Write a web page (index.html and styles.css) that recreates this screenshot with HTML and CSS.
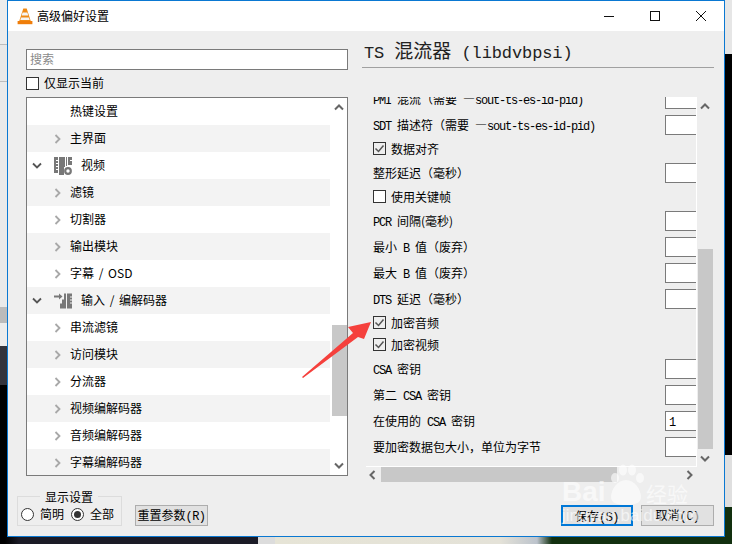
FILE: index.html
```html
<!DOCTYPE html>
<html lang="zh">
<head>
<meta charset="utf-8">
<title>高级偏好设置</title>
<link rel="stylesheet" href="styles.css">
</head>
<body>
<div class="desktop">
  <div class="window">
    <header class="titlebar">
      <svg class="cone" viewBox="0 0 16 17" width="16" height="17">
        <path d="M6.3 0.5h3.4l4.2 13h-11.8z" fill="#f08a14"/>
        <path d="M5.6 4.6h4.8l0.9 3h-6.6z" fill="#f4f4f4"/>
        <path d="M4.2 9.4h7.6l0.9 2.6h-9.4z" fill="#f4f4f4"/>
        <path d="M0.6 13h14.8v3.2h-14.8z" fill="#ef7d0a"/>
      </svg>
      <span class="title-text">高级偏好设置</span>
      <div class="controls">
        <div class="ctl"><svg viewBox="0 0 12 12" width="12" height="12"><path d="M1 6.5h10" stroke="#111" fill="none"/></svg></div>
        <div class="ctl"><svg viewBox="0 0 12 12" width="12" height="12"><rect x="1.5" y="1.5" width="9" height="9" stroke="#111" fill="none"/></svg></div>
        <div class="ctl"><svg viewBox="0 0 12 12" width="12" height="12"><path d="M1 1l10 10M11 1l-10 10" stroke="#111" fill="none"/></svg></div>
      </div>
    </header>
    <div class="body">
      <div class="columns">
        <section class="left">
          <div class="search">搜索</div>
          <label class="only"><span class="box"></span>仅显示当前</label>
          <div class="tree">
            <div class="rows">
              <div class="row child"><span class="name">热键设置</span></div>
              <div class="row child"><svg class="chev" viewBox="0 0 7 10"><path d="M1.5 1l4 4-4 4"/></svg><span class="name">主界面</span></div>
              <div class="row parent">
                <svg class="down" viewBox="0 0 10 7"><path d="M1 1.5l4 4 4-4"/></svg>
                <svg class="ico" viewBox="0 0 18 18" width="18" height="18"><path fill="#787878" d="M0 0h4v3h-2v1h2v2h-2v1h2v2h-2v1h2v2h-2v1h2v3h-4zM5 0h6v10h-1v8h-5zM12 0h1v9h-1zM14 0h4v3h-2v1h2v4h-4z"/><circle cx="14" cy="14" r="2.8" fill="none" stroke="#787878" stroke-width="2.2"/></svg>
                <span class="name pname">视频</span>
              </div>
              <div class="row child"><svg class="chev" viewBox="0 0 7 10"><path d="M1.5 1l4 4-4 4"/></svg><span class="name">滤镜</span></div>
              <div class="row child"><svg class="chev" viewBox="0 0 7 10"><path d="M1.5 1l4 4-4 4"/></svg><span class="name">切割器</span></div>
              <div class="row child"><svg class="chev" viewBox="0 0 7 10"><path d="M1.5 1l4 4-4 4"/></svg><span class="name">输出模块</span></div>
              <div class="row child"><svg class="chev" viewBox="0 0 7 10"><path d="M1.5 1l4 4-4 4"/></svg><span class="name wide">字幕 / OSD</span></div>
              <div class="row parent">
                <svg class="down" viewBox="0 0 10 7"><path d="M1 1.5l4 4 4-4"/></svg>
                <svg class="ico" viewBox="0 0 18 18" width="18" height="18"><path fill="#787878" d="M0 3.5h5v-2l3.5 3-3.5 3v-2h-5zM8 7.5h2v-6h2v15h-6v-5h2zM13 1.5h5v3h-2v1h2v2h-2v1h2v2h-2v1h2v5h-5z"/></svg>
                <span class="name pname wide">输入 / 编解码器</span>
              </div>
              <div class="row child"><svg class="chev" viewBox="0 0 7 10"><path d="M1.5 1l4 4-4 4"/></svg><span class="name">串流滤镜</span></div>
              <div class="row child"><svg class="chev" viewBox="0 0 7 10"><path d="M1.5 1l4 4-4 4"/></svg><span class="name">访问模块</span></div>
              <div class="row child"><svg class="chev" viewBox="0 0 7 10"><path d="M1.5 1l4 4-4 4"/></svg><span class="name">分流器</span></div>
              <div class="row child"><svg class="chev" viewBox="0 0 7 10"><path d="M1.5 1l4 4-4 4"/></svg><span class="name">视频编解码器</span></div>
              <div class="row child"><svg class="chev" viewBox="0 0 7 10"><path d="M1.5 1l4 4-4 4"/></svg><span class="name">音频编解码器</span></div>
              <div class="row child"><svg class="chev" viewBox="0 0 7 10"><path d="M1.5 1l4 4-4 4"/></svg><span class="name">字幕编解码器</span></div>
            </div>
            <div class="vbar tree-bar">
              <svg class="sb-arrow" viewBox="0 0 10 7"><path d="M1 5.5l4-4 4 4"/></svg>
              <div class="track"><div class="thumb tree-thumb"></div></div>
              <svg class="sb-arrow" viewBox="0 0 10 7"><path d="M1 1.5l4 4 4-4"/></svg>
            </div>
          </div>
        </section>
        <section class="right">
          <h1 class="heading"><span class="hl">TS </span>混流器<span class="hl"> (libdvbpsi)</span></h1>
          <div class="scroller">
            <div class="pane">
              <div class="form">
                <div class="field first"><span><span class="l">PMI </span>混流（需要<span class="l"> </span>—<span class="l">sout-ts-es-id-pid)</span></span><i class="inp"></i></div>
                <div class="field"><span><span class="l">SDT </span>描述符（需要<span class="l"> </span>—<span class="l">sout-ts-es-id-pid)</span></span><i class="inp"></i></div>
                <div class="check"><span class="box on"><svg viewBox="0 0 13 13" width="13" height="13"><path d="M2.5 6.5l3 3 5-6"/></svg></span>数据对齐</div>
                <div class="field"><span>整形延迟（毫秒）</span><i class="inp"></i></div>
                <div class="check"><span class="box"></span>使用关键帧</div>
                <div class="field"><span><span class="l">PCR </span>间隔(毫秒)</span><i class="inp"></i></div>
                <div class="field"><span>最小<span class="l"> B </span>值（废弃）</span><i class="inp"></i></div>
                <div class="field"><span>最大<span class="l"> B </span>值（废弃）</span><i class="inp"></i></div>
                <div class="field"><span><span class="l">DTS </span>延迟（毫秒）</span><i class="inp"></i></div>
                <div class="check"><span class="box on"><svg viewBox="0 0 13 13" width="13" height="13"><path d="M2.5 6.5l3 3 5-6"/></svg></span>加密音频</div>
                <div class="check"><span class="box on"><svg viewBox="0 0 13 13" width="13" height="13"><path d="M2.5 6.5l3 3 5-6"/></svg></span>加密视频</div>
                <div class="field"><span><span class="l">CSA </span>密钥</span><i class="inp"></i></div>
                <div class="field"><span>第二<span class="l"> CSA </span>密钥</span><i class="inp"></i></div>
                <div class="field"><span>在使用的<span class="l"> CSA </span>密钥</span><i class="inp"><span class="l">1</span></i></div>
                <div class="field"><span>要加密数据包大小，单位为字节</span><i class="inp"></i></div>
              </div>
            </div>
            <div class="vbar pane-bar">
              <svg class="sb-arrow" viewBox="0 0 10 7"><path d="M1 5.5l4-4 4 4"/></svg>
              <div class="track"><div class="thumb pane-thumb"></div></div>
              <svg class="sb-arrow" viewBox="0 0 10 7"><path d="M1 1.5l4 4 4-4"/></svg>
            </div>
            <div class="hbar">
              <svg class="sb-arrow-h" viewBox="0 0 7 10"><path d="M5.5 1l-4 4 4 4"/></svg>
              <div class="htrack"><div class="hthumb"></div></div>
              <svg class="sb-arrow-h" viewBox="0 0 7 10"><path d="M1.5 1l4 4-4 4"/></svg>
            </div>
          </div>
        </section>
      </div>
      <footer class="footer">
        <fieldset class="group">
          <legend>显示设置</legend>
          <span class="radio"></span><span class="rlabel">简明</span>
          <span class="radio sel"></span><span class="rlabel">全部</span>
        </fieldset>
        <button class="btn reset">重置参数<span class="bl">(R)</span></button>
        <div class="spacer"></div>
        <button class="btn primary">保存<span class="bl">(S)</span></button>
        <button class="btn cancel">取消<span class="bl">(C)</span></button>
      </footer>
    </div>
  </div>
  <svg class="arrow" viewBox="0 0 80 70" width="80" height="70"><polygon points="2,67 53,23 48,17 71,12 64,29 58,27 3,68" fill="#f5403c"/></svg>
  <div class="mark">
    <div class="mark-top">
      <span class="mark-bai">Bai</span>
      <svg class="paw" viewBox="0 0 36 42" width="36" height="42"><g fill="#fff"><ellipse cx="7" cy="14" rx="4" ry="5"/><ellipse cx="15" cy="6" rx="4" ry="5.5"/><ellipse cx="24" cy="6" rx="4" ry="5.5"/><ellipse cx="32" cy="14" rx="4" ry="5"/><path d="M18 16c8 0 15 9 15 17 0 6-6 8-15 8s-15-2-15-8c0-8 7-17 15-17z"/></g></svg>
      <span class="mark-cn">经验</span>
    </div>
    <div class="mark-url">jingyan.baidu.com</div>
  </div>
</div>
</body>
</html>
```
FILE: styles.css
```css
* { box-sizing: border-box; }
html, body { margin: 0; padding: 0; }
body {
  width: 732px;
  height: 544px;
  overflow: hidden;
  font-family: "Noto Sans CJK SC", "Liberation Sans", sans-serif;
  font-size: 12px;
  color: #000;
}
.desktop {
  position: relative;
  width: 732px;
  height: 544px;
  overflow: hidden;
  background:
    linear-gradient(to right, #000 0 5px, #1b1b26 19px, #1b1b26 258px, #dcdcdc 258px 275px, #e6e4d6 275px, #e4e2d8 500px, #bcc3cc 537px, #12300f 552px, #12300f 732px) 0 537px / 732px 7px no-repeat,
    linear-gradient(#e6e6e6 0 54px, #000 54px 455px, #dfdfdf 455px 507px, #12300f 507px) 725px 0 / 7px 537px no-repeat,
    linear-gradient(#ececec 0 44px, #bdbdbd 44px 45px, #e8e8e8 45px 81px, #bdbdbd 81px 82px, #eaeaea 82px 307px, #bbb 307px 323px, #ececec 323px 346px, #33333b 346px 385px, #000 385px) 0 0 / 7px 537px no-repeat,
    #000;
}

/* Window */
.window {
  position: absolute;
  left: 7px;
  top: 0;
  width: 718px;
  height: 537px;
  border: 1px solid #0a78d2;
  background: #eee;
  display: flex;
  flex-direction: column;
}
.titlebar {
  height: 30px;
  background: #fff;
  display: flex;
  align-items: center;
  padding-left: 9px;
  flex: none;
}
.cone { margin-right: 4px; flex: none; }
.title-text { line-height: 30px; }
.controls { margin-left: auto; display: flex; }
.ctl {
  width: 46px;
  height: 30px;
  display: flex;
  align-items: center;
  justify-content: center;
}
.body { flex: 1; display: flex; flex-direction: column; padding-left: 9px; }
.columns { display: flex; height: 445px; padding-left: 9px; flex: none; }

/* Left */
.left { width: 322px; padding-top: 18px; flex: none; display: flex; flex-direction: column; }
.search {
  height: 21px;
  border: 1px solid #7a7a7a;
  background: #fff;
  color: #8a8a8a;
  line-height: 17px;
  padding-left: 3px;
}
.only { display: flex; align-items: center; height: 14px; margin-top: 6px; line-height: 14px; }
.box {
  width: 13px;
  height: 13px;
  border: 1px solid #333;
  background: #fff;
  margin-right: 5px;
  flex: none;
  display: block;
}
.tree {
  margin-top: 7px;
  height: 379px;
  border: 1px solid #7a7a7a;
  background: #fff;
  display: flex;
  overflow: hidden;
}
.rows { width: 303px; flex: none; }
.row { height: 27px; display: flex; align-items: center; position: relative; }
.row:nth-child(even) { background: #f3f3f3; }
.parent { padding-left: 5px; }
.name { white-space: nowrap; margin-bottom: 2px; }
.child .name { position: absolute; left: 43px; }
.wide { word-spacing: 2px; }
.chev { width: 7px; height: 10px; margin-left: 27px; }
.chev path, .down path, .sb-arrow path, .sb-arrow-h path { fill: none; stroke-width: 1.8; }
.chev path { stroke: #a8a8a8; }
.down { width: 10px; height: 7px; }
.down path { stroke: #555; }
.ico { margin-left: 12px; flex: none; }
.pname { margin-left: 9px; }
.vbar { width: 16px; display: flex; flex-direction: column; align-items: center; flex: none; margin-left: 1px; }
.sb-arrow { width: 10px; height: 7px; margin: 6px 0; flex: none; }
.sb-arrow path, .sb-arrow-h path { stroke: #666; stroke-width: 2; }
.track { flex: 1; width: 15px; position: relative; }
.thumb { background: #c8c8c8; width: 15px; }
.tree-thumb { margin-top: 208px; height: 91px; }

/* Right */
.right { margin-left: 14px; width: 352px; flex: none; display: flex; flex-direction: column; }
.heading {
  margin: 0;
  height: 37px;
  border-bottom: 1px solid #a0a0a0;
  font-weight: 400;
  font-size: 19px;
  line-height: 38px;
  padding-left: 2px;
  white-space: pre;
  color: #222;
}
.hl { font-family: "Liberation Mono", monospace; font-size: 17px; letter-spacing: -0.1px; }
.scroller {
  margin-top: 29px;
  margin-left: 4px;
  display: grid;
  grid-template-columns: 331px 16px;
  grid-template-rows: 370px 15px;
}
.pane {
  overflow: hidden;
  border-right: 1px solid #fff;
  border-bottom: 1px solid #fff;
  padding-left: 7px;
}
.form { display: flex; flex-direction: column; margin-top: -11px; }
.field {
  height: 26px;
  display: grid;
  grid-template-columns: 292px 40px;
  align-items: center;
  flex: none;
  white-space: nowrap;
}
.field > span { margin-bottom: 1px; }
.l { font-family: "Liberation Mono", monospace; font-size: 12px; letter-spacing: -1.2px; white-space: pre; }
.inp {
  display: block;
  width: 40px;
  height: 20px;
  border: 1px solid #7a7a7a;
  background: #fff;
  font-style: normal;
  line-height: 18px;
  padding-left: 3px;
}
.check { height: 22px; display: flex; align-items: center; flex: none; padding-bottom: 2px; }
.box.on svg { display: block; margin: -1px; }
.box.on path { fill: none; stroke: #555; stroke-width: 1.5; }
.check .box { margin-right: 5px; margin-top: 1px; }
.box.on { background: #eee; }
.pane-bar { margin-left: 0; }
.pane-bar .sb-arrow { margin: 6px 0 5px; }
.pane-thumb { margin-top: 134px; height: 200px; }
.hbar { grid-column: 1 / span 2; display: flex; align-items: center; padding-left: 3px; }
.sb-arrow-h { width: 7px; height: 10px; flex: none; }
.htrack { flex: none; width: 305px; height: 15px; margin: 0 0 0 5px; }
.hthumb { width: 236px; height: 15px; background: #c8c8c8; }

/* Footer */
.footer { display: flex; align-items: flex-start; height: 38px; margin-top: 12px; flex: none; }
.group {
  width: 105px;
  height: 38px;
  margin: 0;
  padding: 0 0 2px 3px;
  border: 1px solid #dcdcdc;
  display: flex;
  align-items: center;
  min-width: 0;
}
.group legend { margin-left: 19px; padding: 0 5px; line-height: 17px; height: 17px; font-size: 12px; }
.radio {
  width: 13px;
  height: 13px;
  border: 1px solid #333;
  border-radius: 50%;
  background: #fff;
  flex: none;
  position: relative;
}
.radio.sel::after {
  content: "";
  position: absolute;
  left: 2px;
  top: 2px;
  width: 7px;
  height: 7px;
  border-radius: 50%;
  background: #333;
}
.rlabel { margin: 0 7px 2px 6px; }
.btn {
  height: 21px;
  margin-top: 17px;
  background: #e1e1e1;
  border: 1px solid #adadad;
  padding: 0 0 2px;
  font: 12px "Noto Sans CJK SC", "Liberation Sans", sans-serif;
  line-height: 17px;
  color: #000;
}
.bl { font-family: "Liberation Mono", monospace; letter-spacing: -0.6px; }
.reset { width: 73px; margin-left: 13px; }
.spacer { flex: 1; }
.primary { width: 72px; border: 2px solid #0078d7; }
.cancel { width: 73px; margin-left: 8px; margin-right: 10px; }

/* Overlays */
.arrow { position: absolute; left: 300px; top: 310px; }
.mark { position: absolute; left: 562px; top: 463px; width: 130px; opacity: 0.6; color: #fff; }
.mark-top { display: flex; align-items: flex-end; height: 44px; }
.mark-bai { font: 700 28px/30px "Liberation Sans", sans-serif; width: 46px; }
.paw { flex: none; margin-bottom: 1px; }
.mark-cn { font-size: 21px; line-height: 28px; margin-left: 2px; }
.mark-url { font: 17px/18px "Liberation Sans", sans-serif; white-space: nowrap; }
```
